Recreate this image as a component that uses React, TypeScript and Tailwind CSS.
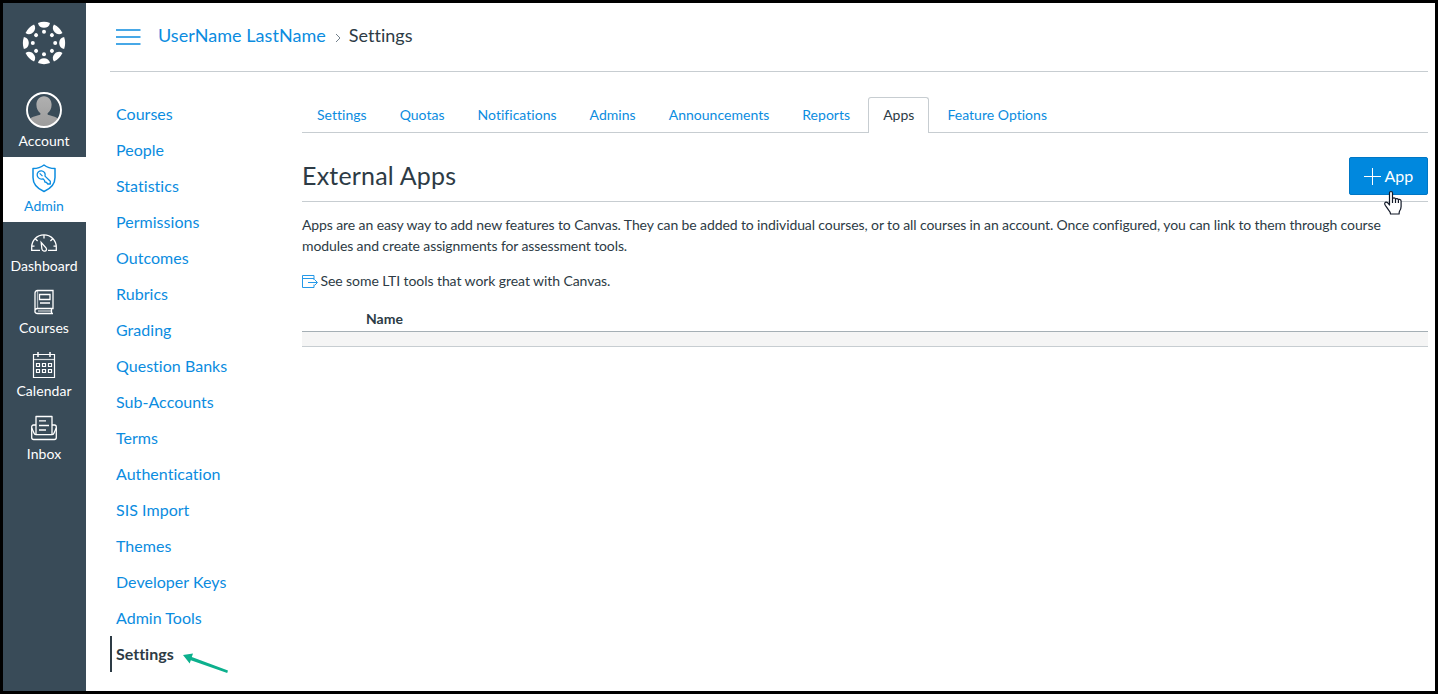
import type { ReactNode } from 'react';

const courseLinks = [
  'Courses', 'People', 'Statistics', 'Permissions', 'Outcomes', 'Rubrics', 'Grading', 'Question Banks',
  'Sub-Accounts', 'Terms', 'Authentication', 'SIS Import', 'Themes', 'Developer Keys', 'Admin Tools',
];

const tabs = ['Settings', 'Quotas', 'Notifications', 'Admins', 'Announcements', 'Reports', 'Apps', 'Feature Options'];

const angles = [0, 45, 90, 135, 180, 225, 270, 315];

function CanvasLogo() {
  return (
    <svg width="44" height="44" viewBox="-22 -22 44 44" fill="white">
      {angles.map((a) => (
        <g key={a} transform={`rotate(${a})`}>
          <path d="M-6 -20.1 Q0 -22.2 6 -20.1 C5.4 -16.8 3 -15.2 0 -15.2 C-3 -15.2 -5.4 -16.8 -6 -20.1Z" />
          <circle cx="0" cy="-11.2" r="2" />
        </g>
      ))}
    </svg>
  );
}

function Avatar() {
  return (
    <svg width="36" height="36" viewBox="0 0 36 36">
      <defs>
        <clipPath id="face"><circle cx="18" cy="18" r="16.5" /></clipPath>
        <linearGradient id="grey" x1="0" y1="0" x2="0" y2="1">
          <stop offset="0" stopColor="#b0b0b0" />
          <stop offset="1" stopColor="#9b9b9b" />
        </linearGradient>
      </defs>
      <g clipPath="url(#face)" fill="url(#grey)">
        <path d="M18 4.2c4.6 0 7.6 3.6 7.6 8.600 0 3.800-1.700 7-4 8.500v1.200c1.800 1.300 8.600 1.500 11.400 5.200V36H3v-8.300c2.800-3.700 9.600-3.900 11.400-5.200v-1.200c-2.300-1.500-4-4.700-4-8.500 0-5 3-8.600 7.600-8.600z" />
      </g>
      <circle cx="18" cy="18" r="17" fill="none" stroke="white" strokeWidth="1.900" />
    </svg>
  );
}

function AdminIcon() {
  return (
    <svg width="26" height="30" viewBox="0 0 26 30" fill="none" stroke="#0b8ce0" strokeWidth="1.5" strokeLinejoin="round">
      <path d="M13 1C10 3.400 6 4.500 2 4.500v9C2 20 6.500 24.700 13 27.500 19.500 24.700 24 20 24 13.500v-9C20 4.500 16 3.400 13 1z" />
      <path d="M7.300 8c1.900-1.900 5-1.500 6.300.7.700 1.200.7 2.300.4 3.400l5.300 5.200v2.700h-2.500l-1.500-1.700-1.400-.3-.4-1.600-1.600-1.600c-1.500.6-3.300.2-4.400-.9-1.700-1.700-1.800-4.300-.2-5.900z" strokeWidth="1.300" />
      <path d="M8.700 9.300l2.800 2.800" strokeWidth="1.200" />
    </svg>
  );
}

function DashboardIcon() {
  return (
    <svg width="28" height="20" viewBox="0 0 28 20" fill="none" stroke="white" strokeWidth="1.300">
      <path d="M10 17.400H1.700v-3.200C1.700 7.200 7 1.900 14 1.900s12.300 5.300 12.300 12.300v3.200H18" />
      <path d="M14 2v3.500M5.300 5.700l2.300 2.300M22.700 5.700l-2.300 2.300M2 13.200h2.500M23.500 13.200H26" />
      <path d="M11.200 9.500l.7 6.500c.3 2.400 3.800 2.900 4.500 1 .3-.8.100-1.500-.4-2.200z" />
    </svg>
  );
}

function CoursesIcon() {
  return (
    <svg width="22" height="26" viewBox="0 0 22 26" fill="none" stroke="white" strokeWidth="1.300">
      <path d="M4.500 1.500H20v18H4.500c-3.500 0-3.500 5 0 5H20M2 22V4c0-1.500 1-2.500 2.500-2.500M18.500 19.500v5" />
      <path d="M4.500 2v17.500M5 22h13" opacity=".6" />
      <path d="M6.500 5.500H17v5H6.500zM7 14h10" />
    </svg>
  );
}

function CalendarIcon() {
  return (
    <svg width="26" height="28" viewBox="0 0 26 28" fill="none" stroke="white" strokeWidth="1.200">
      <path d="M2.500 3.500h21v23h-21z" />
      <path d="M2.500 8.500h21" opacity=".8" />
      <path d="M7 1v5M19 1v5" strokeWidth="1.500" />
      <path d="M5.500 12.500h3v3h-3zM11.500 12.500h3v3h-3zM17.500 12.500h3v3h-3zM5.500 18.500h3v3h-3zM11.500 18.500h3v3h-3zM17.500 18.500h3v3h-3z" />
    </svg>
  );
}

function InboxIcon() {
  return (
    <svg width="28" height="26" viewBox="0 0 28 26" fill="none" stroke="white" strokeWidth="1.300" strokeLinejoin="round">
      <path d="M6 19V1.500h16V19" />
      <path d="M6 10H3.500c-1.200 0-1.800.8-1.800 2v10.500c0 1.200.8 2 2 2h20.600c1.200 0 2-.8 2-2V12c0-1.200-.6-2-1.800-2H22" />
      <path d="M1.700 13l2.500 5.500c.4.900 1 1.200 2 1.200h15.600c1 0 1.600-.3 2-1.200l2.500-5.500" />
      <path d="M9 5.800h7M9 10.500h10M9 15h7" />
    </svg>
  );
}

function NavItem({ icon, label, first = false }: { icon: ReactNode; label: string; first?: boolean }) {
  return (
    <a className={`flex w-full shrink-0 flex-col items-center text-white ${first ? 'h-[62px]' : 'h-[63px]'}`}>
      <span className={`flex h-[30px] items-center ${first ? 'pt-[12px]' : 'pt-[6px]'}`}>{icon}</span>
      <span className="mt-[4px] text-[14px] leading-[20px] tracking-[0.060px]">{label}</span>
    </a>
  );
}

function HandCursor() {
  return (
    <svg className="absolute left-[33px] top-[32px]" width="20" height="26" viewBox="0 0 20 26" fill="white" stroke="#111827" strokeWidth="1.200" strokeLinejoin="round">
      <path d="M6.500 15V3.200c0-2.300 3-2.300 3 0V9c.3-1.500 2.800-1.500 3 .3.500-1.100 2.700-1 2.900.7.700-1 2.700-.6 2.700 1.200v5.300c0 2-.6 3.200-1.500 4.500-.5.900-.5 2-.5 3H7.500c0-1.500-.5-2.300-1.500-3.400-1.500-1.700-2.200-3.500-3.500-5-1.300-1.600-1-3 .4-3.400 1.300-.3 2.500.9 3.600 2.800zM9.500 9v4M12.500 9.500V13M15.400 10.500V13" />
    </svg>
  );
}

export default function App() {
  return (
    <div className="flex h-[694px] w-[1438px] overflow-hidden border-[3px] border-black bg-white font-['Lato',sans-serif] text-[14px] text-[#2d3b45] [font-variant-ligatures:none]">
      <nav className="flex w-[83px] shrink-0 flex-col items-center bg-[#394b58] pr-px">
        <div className="flex h-[84px] shrink-0 items-center pb-[4px]"><CanvasLogo /></div>
        <a className="flex h-[70px] shrink-0 flex-col items-center pt-[5px] text-white">
          <Avatar />
          <span className="mt-[3px] text-[14px] leading-[20px]">Account</span>
        </a>
        <a className="-mr-px flex h-[65px] w-[83px] shrink-0 flex-col items-center self-start bg-white pr-px pt-[7px] text-[#0b8ce0]">
          <AdminIcon />
          <span className="mt-[2px] text-[14px] leading-[20px]">Admin</span>
        </a>
        <NavItem icon={<DashboardIcon />} label="Dashboard" first />
        <NavItem icon={<CoursesIcon />} label="Courses" />
        <NavItem icon={<CalendarIcon />} label="Calendar" />
        <NavItem icon={<InboxIcon />} label="Inbox" />
      </nav>

      <div className="flex min-w-0 flex-1 flex-col pl-[24px] pr-[7px]">
        <header className="flex h-[69px] shrink-0 items-center border-b border-[#c7cdd1] pl-[6px] text-[18px]">
          <svg width="25" height="18" viewBox="0 0 25 18" stroke="#0b8ce0" strokeWidth="1.500">
            <path d="M0 2h24.500M0 9h24.500M0 16h24.500" />
          </svg>
          <a className="-mt-[3px] ml-[17px] tracking-[0.050px] text-[#0b8ce0]">UserName LastName</a>
          <svg className="ml-[9px] mr-[8px] mt-[2px]" width="6" height="10" viewBox="0 0 6 10" fill="none" stroke="#73818c">
            <path d="M1 1l4 4-4 4" />
          </svg>
          <span className="-mt-[3px]">Settings</span>
        </header>

        <div className="flex min-h-0 flex-1">
          <aside className="flex w-[192px] shrink-0 flex-col pt-[24px] text-[16px] text-[#0b8ce0]">
            {courseLinks.map((l) => (
              <a key={l} className="flex h-[36px] shrink-0 items-center pl-[6px] tracking-[0.030px]">{l}</a>
            ))}
            <div className="flex h-[36px] shrink-0 items-center border-l-2 border-[#2d3b45] pl-[4px] font-bold text-[#2d3b45]">
              Settings
              <svg className="ml-[8px] mt-[18px]" width="48" height="22" viewBox="0 0 48 22" fill="#0cb08d">
                <path d="M1 3L11 1.500 9.800 5 46 18.500 45.200 21 8.800 8.300 7.700 11.500z" />
              </svg>
            </div>
          </aside>

          <main className="flex min-w-0 flex-1 flex-col pt-[25px]">
            <div className="flex h-[36px] shrink-0 border-b border-[#c7cdd1] tracking-[0.025px]">
              {tabs.map((t) =>
                t === 'Apps' ? (
                  <a key={t} className="relative -mb-px mr-[3px] h-[36px] rounded-t-[3px] border border-b-0 border-[#c7cdd1] bg-white px-[14px] pt-[7px] leading-[20px]">{t}</a>
                ) : (
                  <a key={t} className="mr-[3px] px-[15px] pt-[8px] leading-[20px] text-[#0b8ce0]">{t}</a>
                ),
              )}
            </div>

            <div className="flex h-[69px] shrink-0 justify-between border-b border-[#c7cdd1] pt-[24px]">
              <h2 className="-mt-px text-[25px] leading-[38px] tracking-[0.200px]">External Apps</h2>
              <button className="relative flex h-[38px] w-[79px] items-center rounded-[2px] border border-[#0077c5] bg-[#0088de] pl-[14px] text-[16px] text-white">
                <svg width="17" height="17" viewBox="0 0 17 17" stroke="white"><path d="M8.500 0v17M0 8.500h17" /></svg>
                <span className="ml-[3.500px]">App</span>
                <HandCursor />
              </button>
            </div>

            <p className="mt-[12px] leading-[21px] tracking-[-0.105px]">
              Apps are an easy way to add new features to Canvas. They can be added to individual courses, or to all courses in an account. Once configured, you can link to them through course modules and create assignments for assessment tools.
            </p>
            <p className="mt-[14px] flex h-[21px] items-center tracking-[-0.075px]">
              <svg className="mr-[2.500px] mt-[2px]" width="16" height="13" viewBox="0 0 16 13" fill="none" stroke="#2599e8">
                <path d="M12 5V.5H.5v12H12V9.500M.5 3.500H12M6 7.500h9M12.500 4.500l3 3-3 3" />
              </svg>
              See some LTI tools that work great with Canvas.
            </p>
            <div className="mt-[18px] flex h-[23px] shrink-0 border-b border-[#a5afb5] pl-[64px] font-bold leading-[20px]">Name</div>
            <div className="h-[15px] shrink-0 border-b border-[#c7cdd1] bg-[#f5f5f5]" />
          </main>
        </div>
      </div>
    </div>
  );
}
